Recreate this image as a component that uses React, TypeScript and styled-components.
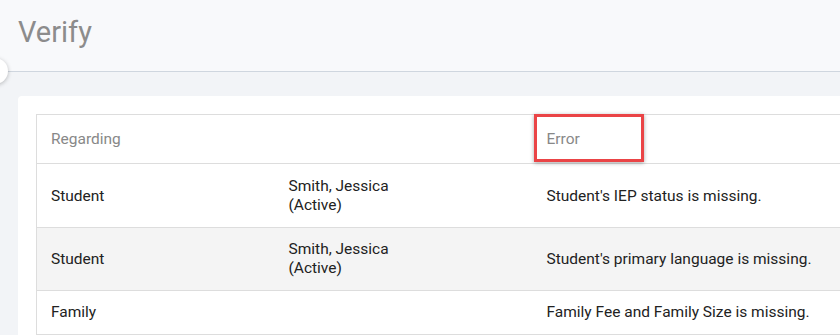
import styled, { createGlobalStyle } from "styled-components";

const GlobalStyle = createGlobalStyle`
  html, body {
    margin: 0;
    padding: 0;
    background: #f2f4f7;
    font-family: Roboto, "Liberation Sans", Arial, sans-serif;
    overflow: hidden;
  }
`;

const Page = styled.div`
  width: 840px;
  height: 335px;
  overflow: hidden;
  background: #f2f4f7;
`;

const PageHeader = styled.header`
  position: relative;
  height: 72px;
  background: #f8f9fb;
  border-bottom: 1px solid #cfd6df;
  box-sizing: border-box;
  padding: 15px 0 0 18px;
`;

const Title = styled.h1`
  margin: 0;
  font-weight: 400;
  font-size: 29px;
  line-height: 34px;
  color: #8c8c8c;
`;

const SideToggle = styled.button`
  position: absolute;
  left: -18px;
  top: 58px;
  width: 26px;
  height: 26px;
  border-radius: 50%;
  border: none;
  padding: 0;
  background: #fff;
  box-shadow: 0 1px 4px rgba(0, 0, 0, 0.25);
`;

const Content = styled.main`
  padding: 24px 0 0 18px;
`;

const Card = styled.section`
  width: 1000px;
  background: #fff;
  border-radius: 4px;
  padding: 18px;
  box-sizing: border-box;
`;

const Table = styled.table`
  width: 100%;
  border-collapse: collapse;
  table-layout: fixed;
  border: 1px solid #dddddd;
  font-size: 15.5px;
  line-height: 19px;
`;

const HeadCell = styled.th`
  position: relative;
  text-align: left;
  font-weight: 400;
  color: #888888;
  padding: 15px 14px 14px;
`;

const Highlight = styled.span`
  position: absolute;
  left: 1px;
  top: -1px;
  width: 110px;
  height: 48px;
  box-sizing: border-box;
  border: 3px solid #ea4446;
  box-shadow: 0 1px 4px rgba(0, 0, 0, 0.35);
`;

const Row = styled.tr<{ $shaded?: boolean }>`
  background: ${(p) => (p.$shaded ? "#f4f4f4" : "#fff")};
  border-top: 1px solid #dddddd;
`;

const Cell = styled.td<{ $padTop?: number }>`
  padding: ${(p) => p.$padTop ?? 12}px 14px 12px;
  color: #222;
  vertical-align: middle;
`;

const rows = [
  { regarding: "Student", who: ["Smith, Jessica", "(Active)"], error: "Student's IEP status is missing.", padTop: 13 },
  { regarding: "Student", who: ["Smith, Jessica", "(Active)"], error: "Student's primary language is missing.", padTop: 12 },
  { regarding: "Family", who: [], error: "Family Fee and Family Size is missing.", padTop: 12 },
];

export default function App() {
  return (
    <Page>
      <GlobalStyle />
      <PageHeader>
        <Title>Verify</Title>
        <SideToggle aria-label="Toggle sidebar" />
      </PageHeader>
      <Content>
        <Card>
          <Table>
            <colgroup>
              <col style={{ width: 238 }} />
              <col style={{ width: 258 }} />
              <col />
            </colgroup>
            <thead>
              <tr>
                <HeadCell>Regarding</HeadCell>
                <HeadCell />
                <HeadCell>
                  Error
                  <Highlight />
                </HeadCell>
              </tr>
            </thead>
            <tbody>
              {rows.map((r, i) => (
                <Row key={i} $shaded={i === 1}>
                  <Cell $padTop={r.padTop}>{r.regarding}</Cell>
                  <Cell $padTop={r.padTop}>
                    {r.who.map((line, j) => (
                      <div key={j}>{line}</div>
                    ))}
                  </Cell>
                  <Cell $padTop={r.padTop}>{r.error}</Cell>
                </Row>
              ))}
            </tbody>
          </Table>
        </Card>
      </Content>
    </Page>
  );
}
